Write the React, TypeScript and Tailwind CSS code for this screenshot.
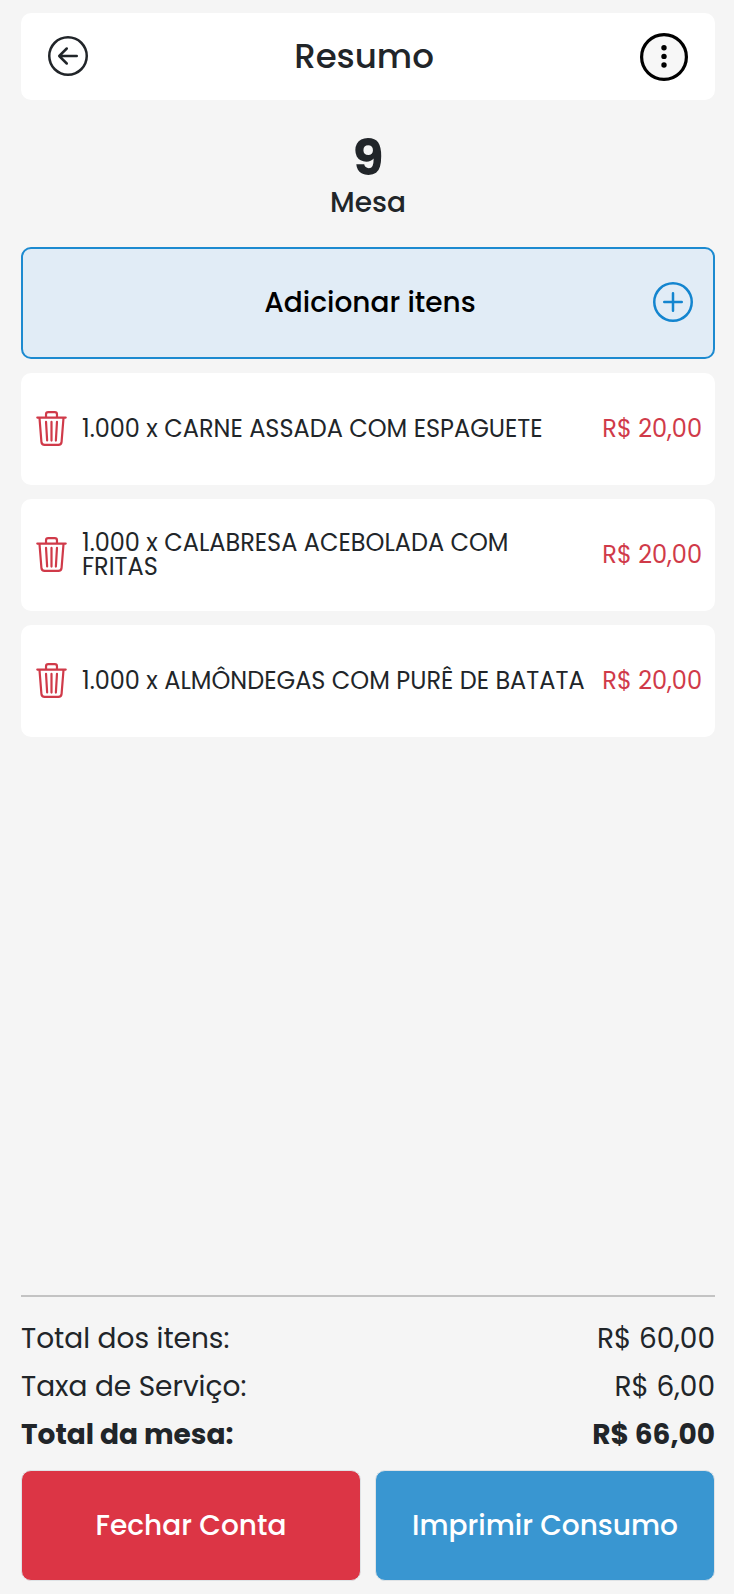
import { BsArrowLeftCircle, BsPlusCircle, BsTrash3 } from 'react-icons/bs';

interface Item {
    id: number;
    quantity: string;
    name: string;
    price: string;
}

const items: Item[] = [
    { id: 1, quantity: '1.000', name: 'CARNE ASSADA COM ESPAGUETE', price: 'R$ 20,00' },
    { id: 2, quantity: '1.000', name: 'CALABRESA ACEBOLADA COM FRITAS', price: 'R$ 20,00' },
    { id: 3, quantity: '1.000', name: 'ALMÔNDEGAS COM PURÊ DE BATATA', price: 'R$ 20,00' },
];

const MoreIcon = () => (
    <svg viewBox="0 0 48 48" className="h-12 w-12" aria-hidden="true">
        <circle cx="24" cy="24" r="22.4" fill="#f7f7f7" stroke="#000" strokeWidth="3.2" />
        <circle cx="24" cy="14.8" r="2.7" />
        <circle cx="24" cy="23.4" r="2.7" />
        <circle cx="24" cy="32" r="2.7" />
    </svg>
);

const ItemCard = ({ item }: { item: Item }) => (
    <li className="flex min-h-28 items-center rounded-[10px] bg-white px-[13px]">
        <button type="button" aria-label={`Remover ${item.name}`} className="shrink-0 pb-0.5 text-[#d03a49]">
            <BsTrash3 className="h-[35px] w-[35px]" />
        </button>
        <span className="ml-[13px] flex-1 text-[24px] leading-6">
            {item.quantity} x {item.name}
        </span>
        <span className="ml-[13px] shrink-0 text-[24px] leading-6 text-[#d03a49]">{item.price}</span>
    </li>
);

const App = () => {
    return (
        <div className="flex min-h-screen flex-col bg-[#f5f5f5] pt-[13px] pr-[19px] pb-[13px] pl-[21px] font-['Poppins','Inter',sans-serif] text-[#212529]">
            {/* Header */}
            <header className="flex h-[87px] items-center justify-between rounded-[10px] bg-white px-[27px]">
                <button type="button" aria-label="Voltar" className="pb-0.5">
                    <BsArrowLeftCircle className="h-10 w-10" />
                </button>
                <h1 className="text-[34px] font-medium">Resumo</h1>
                <button type="button" aria-label="Mais opções">
                    <MoreIcon />
                </button>
            </header>

            {/* Table number */}
            <div className="flex flex-col items-center pt-8 pb-[25px]">
                <span className="text-[50px] leading-[52px] font-bold">9</span>
                <span className="text-[28px] leading-[38px] font-medium">Mesa</span>
            </div>

            <button
                type="button"
                className="flex h-28 items-center rounded-[10px] border-2 border-[#1c8ad0] bg-[#e1ecf6] px-5 text-black"
            >
                <span className="ml-11 flex-1 text-[28px] font-medium">Adicionar itens</span>
                <span className="pb-0.5 text-[#1385cf]">
                    <BsPlusCircle className="h-10 w-10" />
                </span>
            </button>

            {/* Items */}
            <ul className="mt-[14px] flex flex-1 flex-col gap-[14px]">
                {items.map((item) => (
                    <ItemCard key={item.id} item={item} />
                ))}
            </ul>

            {/* Totals */}
            <dl className="border-t-2 border-[#c3c3c3] pt-[18px] pb-[11px] text-[28px] leading-[48px]">
                <div className="flex justify-between">
                    <dt>Total dos itens:</dt>
                    <dd>R$ 60,00</dd>
                </div>
                <div className="flex justify-between">
                    <dt>Taxa de Serviço:</dt>
                    <dd>R$ 6,00</dd>
                </div>
                <div className="flex justify-between font-bold">
                    <dt>Total da mesa:</dt>
                    <dd>R$ 66,00</dd>
                </div>
            </dl>

            <div className="grid grid-cols-2 gap-[14px] text-[28px] font-medium text-white">
                <button type="button" className="h-[111px] rounded-[10px] border border-[#dfe3e6] bg-[#dc3545]">
                    Fechar Conta
                </button>
                <button type="button" className="h-[111px] rounded-[10px] border border-[#dfe3e6] bg-[#3996d1]">
                    Imprimir Consumo
                </button>
            </div>
        </div>
    );
};

export default App;
